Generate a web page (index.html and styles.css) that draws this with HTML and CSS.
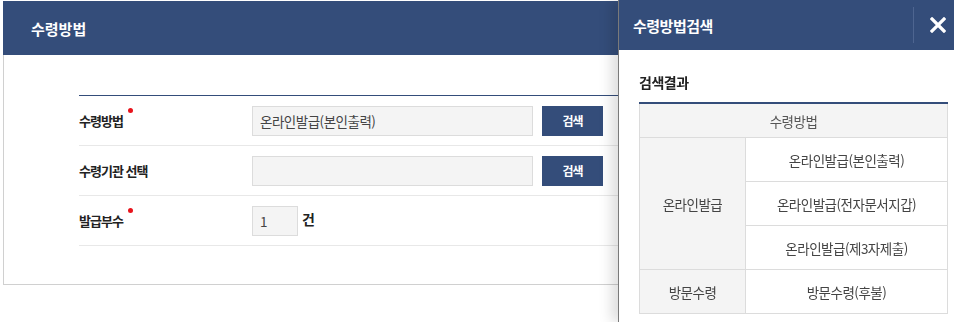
FILE: index.html
```html
<!DOCTYPE html>
<html lang="ko">
<head>
    <meta charset="UTF-8">
    <title>수령방법</title>
    <link rel="stylesheet" href="styles.css">
</head>
<body>
    <div class="page">
        <div class="page-head">
            <h1>수령방법</h1>
        </div>

        <div class="page-body">
            <div class="form">
                <!-- 수령방법 -->
                <div class="form-row">
                    <label class="req">수령방법</label>
                    <div class="field">
                        <input type="text" class="text-input" value="온라인발급(본인출력)" readonly>
                        <button class="btn-search">검색</button>
                    </div>
                </div>

                <!-- 수령기관 -->
                <div class="form-row">
                    <label>수령기관 선택</label>
                    <div class="field">
                        <input type="text" class="text-input" value="" readonly>
                        <button class="btn-search">검색</button>
                    </div>
                </div>

                <!-- 발급부수 -->
                <div class="form-row">
                    <label class="req">발급부수</label>
                    <div class="field">
                        <input type="text" class="count-input" value="1">
                        <span class="unit">건</span>
                    </div>
                </div>
            </div>
        </div>
    </div>

    <div class="drawer">
        <div class="drawer-head">
            <h2>수령방법검색</h2>
            <button class="btn-close" aria-label="닫기">
                <svg width="16" height="16" viewBox="0 0 16 16">
                    <path d="M2 2 L14 14 M14 2 L2 14" stroke="#fff" stroke-width="3.2" stroke-linecap="square" fill="none"/>
                </svg>
            </button>
        </div>

        <div class="drawer-body">
            <h3>검색결과</h3>
            <table class="result-table">
                <thead>
                    <tr><th colspan="2">수령방법</th></tr>
                </thead>
                <tbody>
                    <tr>
                        <td class="group" rowspan="3">온라인발급</td>
                        <td>온라인발급(본인출력)</td>
                    </tr>
                    <tr><td>온라인발급(전자문서지갑)</td></tr>
                    <tr><td>온라인발급(제3자제출)</td></tr>
                    <tr>
                        <td class="group">방문수령</td>
                        <td>방문수령(후불)</td>
                    </tr>
                </tbody>
            </table>
        </div>
    </div>
</body>
</html>
```

FILE: styles.css
```css
body {
    margin: 0;
    font-family: "Noto Sans CJK KR", "Noto Sans", sans-serif;
    color: #222;
    background: #fff;
    overflow: hidden;
}

.page {
    margin: 1px 3px 0 3px;
}

.page-head {
    height: 54px;
    background: #344d7a;
    display: flex;
    align-items: center;
    padding-left: 28px;
}

.page-head h1 {
    margin: 0;
    color: #fff;
    font-size: 15px;
    font-weight: bold;
}

.page-body {
    border: 1px solid #d0d0d0;
    border-top: none;
    padding: 40px 40px 38px 75px;
}

.form {
    border-top: 1px solid #344d7a;
}

.form-row {
    display: flex;
    align-items: center;
    height: 49px;
    border-bottom: 1px solid #e8e8e8;
}

.form-row label {
    width: 173px;
    font-size: 13px;
    font-weight: bold;
    letter-spacing: -1px;
    color: #222;
}

.req::after {
    content: "";
    display: inline-block;
    width: 5px;
    height: 5px;
    border-radius: 50%;
    background: #e8141c;
    vertical-align: top;
    margin: -3px 0 0 5px;
}

.field {
    display: flex;
    align-items: center;
}

.text-input, .count-input {
    box-sizing: border-box;
    height: 30px;
    border: 1px solid #dcdcdc;
    background: #f4f4f4;
    padding: 0 7px;
    font-family: inherit;
    font-size: 13.5px;
    letter-spacing: -0.5px;
    color: #444;
    outline: none;
}

.text-input {
    width: 281px;
    margin-right: 9px;
}

.count-input {
    width: 46px;
}

.unit {
    margin-left: 4px;
    font-size: 14px;
    font-weight: bold;
    color: #222;
    position: relative;
    top: -2px;
}

.btn-search {
    width: 61px;
    height: 30px;
    border: none;
    background: #344d7a;
    color: #fff;
    font-family: inherit;
    font-size: 12px;
    font-weight: bold;
    letter-spacing: -1px;
    cursor: pointer;
}

/* 검색 레이어 */
.drawer {
    position: fixed;
    top: 0;
    bottom: 0;
    left: 618px;
    width: 340px;
    background: #fff;
    border-left: 1px solid #7a7a7a;
    box-shadow: -7px 0 12px rgba(0, 0, 0, 0.13);
}

.drawer-head {
    height: 50px;
    background: #344d7a;
    display: flex;
    align-items: center;
    padding-left: 14px;
}

.drawer-head h2 {
    margin: 0;
    flex: 1;
    color: #fff;
    font-size: 15px;
    font-weight: bold;
    letter-spacing: -0.5px;
}

.btn-close {
    height: 36px;
    width: 44px;
    border: none;
    border-left: 1px solid #4e6590;
    background: none;
    padding: 0 0 0 16px;
    margin-right: 2px;
    display: flex;
    align-items: center;
    cursor: pointer;
}

.drawer-body {
    padding: 22px 10px 0 20px;
}

.drawer-body h3 {
    margin: 0 0 10px;
    font-size: 14px;
    line-height: 20px;
    font-weight: bold;
    letter-spacing: -0.5px;
    color: #222;
}

.result-table {
    width: 309px;
    border-collapse: collapse;
    border-top: 2px solid #344d7a;
    font-size: 13.5px;
    letter-spacing: -0.5px;
    color: #444;
}

.result-table th {
    height: 31px;
    background: #f4f4f4;
    font-weight: normal;
    color: #555;
    border: 1px solid #dcdcdc;
    border-top: none;
}

.result-table td {
    height: 43px;
    padding: 0;
    text-align: center;
    border: 1px solid #dcdcdc;
}

.result-table td.group {
    width: 105px;
    background: #f4f4f4;
}
```
